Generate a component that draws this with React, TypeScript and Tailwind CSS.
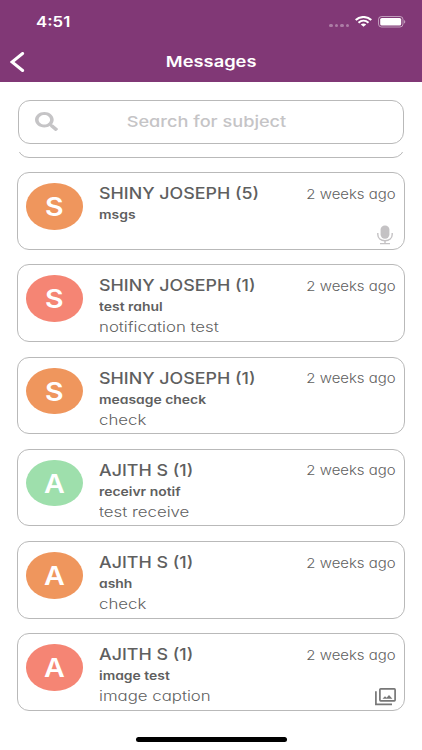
import type { ReactNode } from 'react';
import { FaSearch } from 'react-icons/fa';
import clsx from 'clsx';

interface Message {
  id: number;
  sender: string;
  count: number;
  subject: string;
  preview?: string;
  time: string;
  color: string;
  attachment?: 'voice' | 'image';
}

const messages: Message[] = [
  {
    id: 1,
    sender: 'SHINY JOSEPH',
    count: 5,
    subject: 'msgs',
    time: '2 weeks ago',
    color: 'bg-[#ef965d]',
    attachment: 'voice',
  },
  {
    id: 2,
    sender: 'SHINY JOSEPH',
    count: 1,
    subject: 'test rahul',
    preview: 'notification test',
    time: '2 weeks ago',
    color: 'bg-[#f58574]',
  },
  {
    id: 3,
    sender: 'SHINY JOSEPH',
    count: 1,
    subject: 'measage check',
    preview: 'check',
    time: '2 weeks ago',
    color: 'bg-[#ef965d]',
  },
  {
    id: 4,
    sender: 'AJITH S',
    count: 1,
    subject: 'receivr notif',
    preview: 'test receive',
    time: '2 weeks ago',
    color: 'bg-[#9edfac]',
  },
  {
    id: 5,
    sender: 'AJITH S',
    count: 1,
    subject: 'ashh',
    preview: 'check',
    time: '2 weeks ago',
    color: 'bg-[#ef965d]',
  },
  {
    id: 6,
    sender: 'AJITH S',
    count: 1,
    subject: 'image test',
    preview: 'image caption',
    time: '2 weeks ago',
    color: 'bg-[#f58574]',
    attachment: 'image',
  },
];

function Wide({ className, children }: { className?: string; children: ReactNode }) {
  return (
    <span className={clsx('block w-max whitespace-nowrap', className)}>
      {children}
    </span>
  );
}

function MicIcon() {
  return (
    <svg className="mt-[21.5px] mr-[3px] shrink-0" width="16" height="20" viewBox="0 0 16 20" fill="none" stroke="#c4c2c4">
      <rect x="3.6" y="0.4" width="8.8" height="13.4" rx="4.2" fill="#c4c2c4" stroke="none" />
      <path d="M0.8 8V9.6C0.8 13.2 3.7 15.7 8 15.7S15.2 13.2 15.2 9.6V8" strokeWidth="1.4" />
      <path d="M8 15.7V18.4M3 18.6H13" strokeWidth="1.4" />
    </svg>
  );
}

function PhotosIcon() {
  return (
    <svg className="mt-[23px] shrink-0" width="21" height="18" viewBox="0 0 21 18" fill="none" stroke="#777">
      <rect x="4.9" y="0.9" width="15.2" height="12" rx="0.8" strokeWidth="1.7" />
      <path d="M0.9 3.2V16.3H17" strokeWidth="1.7" />
      <path d="M7.5 10.8L10 8.2L11.6 9.7L14 7L17.4 10.8Z" fill="#777" stroke="none" />
    </svg>
  );
}

function StatusBar() {
  return (
    <div className="flex h-[42px] items-center justify-between pl-[35.5px] pr-[16px]">
      <Wide className="origin-left scale-x-[1.16] pt-[2px] text-[14.5px] leading-5 font-semibold">
        4:51
      </Wide>
      <div className="flex items-center pt-[1px]">
        <div className="mt-[7px] mr-[6px] flex gap-[2px]">
          {[0, 1, 2, 3].map((dot) => (
            <span key={dot} className="h-[3px] w-[3.5px] rounded-full bg-white/35" />
          ))}
        </div>
        <svg width="17" height="11" viewBox="0 0 17 11" fill="none" stroke="white">
          <path d="M0.7 4C5 0 12 0 16.3 4" strokeWidth="2.1" />
          <path d="M3.5 6.8C6.4 4.2 10.6 4.2 13.5 6.8" strokeWidth="2" />
          <path d="M8.5 10.8L5.8 8.5C7.3 7.2 9.7 7.2 11.2 8.5Z" fill="white" stroke="none" />
        </svg>
        <svg className="ml-[6px]" width="28" height="12" viewBox="0 0 28 12">
          <rect x="0.5" y="0.5" width="24.5" height="10.5" rx="3" fill="none" stroke="white" strokeOpacity="0.5" />
          <rect x="2.2" y="2" width="21" height="7.5" rx="1.6" fill="white" />
          <path d="M26.2 4C27.6 4.4 27.6 7.2 26.2 7.6Z" fill="white" fillOpacity="0.6" />
        </svg>
      </div>
    </div>
  );
}

function Header() {
  return (
    <header className="h-[81.5px] bg-[#813876] text-white [font-feature-settings:normal]">
      <StatusBar />
      <div className="grid h-[39px] grid-cols-[48px_1fr_48px] items-center">
        <button aria-label="Back" className="pl-[10px]">
          <svg width="15" height="20" viewBox="0 0 15 20" fill="none" stroke="white" strokeWidth="3">
            <path d="M12.6 1.5L2 10L12.6 18.5" strokeLinecap="round" />
          </svg>
        </button>
        <Wide className="origin-center scale-x-[1.22] justify-self-center text-[15px] leading-5 font-semibold">
          Messages
        </Wide>
      </div>
    </header>
  );
}

function MessageCard({ message }: { message: Message }) {
  const { sender, count, subject, preview, time, color, attachment } = message;

  return (
    <div className="flex h-[77.6px] shrink-0 rounded-[12px] border border-[#b9b9b9] pt-[10px] pr-[8.5px] pl-[8px]">
      <div
        className={clsx(
          'flex h-[46.5px] w-[56.5px] shrink-0 items-center justify-center rounded-[50%]',
          color
        )}
      >
        <Wide className="scale-x-[1.12] pt-[1px] text-[25.5px] leading-none font-semibold text-white">
          {sender[0]}
        </Wide>
      </div>

      {/* Sender, subject and preview */}
      <div className="ml-[16.5px] flex-1 pt-[1px] text-[#5f5f5f]">
        <Wide className="origin-left scale-x-[1.15] text-[15.5px] leading-[20px] font-medium">
          {sender} ({count})
        </Wide>
        <Wide className="mt-[3px] origin-left scale-x-[1.16] text-[12px] leading-[16px] font-semibold">
          {subject}
        </Wide>
        {preview && (
          <Wide className="mt-[2px] origin-left scale-x-[1.2] text-[14px] leading-[20px] font-light">
            {preview}
          </Wide>
        )}
      </div>

      {/* Time and attachment */}
      <div className="flex flex-col items-end pt-[0.5px]">
        <Wide className="origin-right scale-x-[1.15] text-[13px] leading-[20px] font-light text-[#5f5f5f]">
          {time}
        </Wide>
        {attachment === 'voice' && <MicIcon />}
        {attachment === 'image' && <PhotosIcon />}
      </div>
    </div>
  );
}

export default function App() {
  return (
    <div className="flex h-[750px] w-[422px] flex-col overflow-hidden bg-white font-['Inter',sans-serif] [font-feature-settings:'cv11','ss03']">
      <Header />

      <div className="mx-[18px] mt-[18.5px] grid h-[43.5px] shrink-0 grid-cols-[48px_1fr_68px] items-center rounded-[12px] border border-[#b9b9b9] pl-[16px] text-[#c5c4c6]">
        <FaSearch preserveAspectRatio="none" className="h-[19px] w-[23px]" />
        <Wide className="origin-center scale-x-[1.21] justify-self-center pr-[4px] text-[15px] leading-5 font-medium">
          Search for subject
        </Wide>
      </div>

      {/* Scrolled list, the previous card is cut off at the top */}
      <div className="mt-[8.5px] flex h-[570px] shrink-0 flex-col gap-[14.65px] overflow-hidden px-[17px]">
        <div className="-mt-[72.1px] h-[77.6px] shrink-0 rounded-[12px] border border-[#b9b9b9]" />
        {messages.map((message) => (
          <MessageCard key={message.id} message={message} />
        ))}
      </div>

      <div className="mx-auto mt-[15px] h-[5px] w-[151px] shrink-0 rounded-full bg-black" />
    </div>
  );
}
